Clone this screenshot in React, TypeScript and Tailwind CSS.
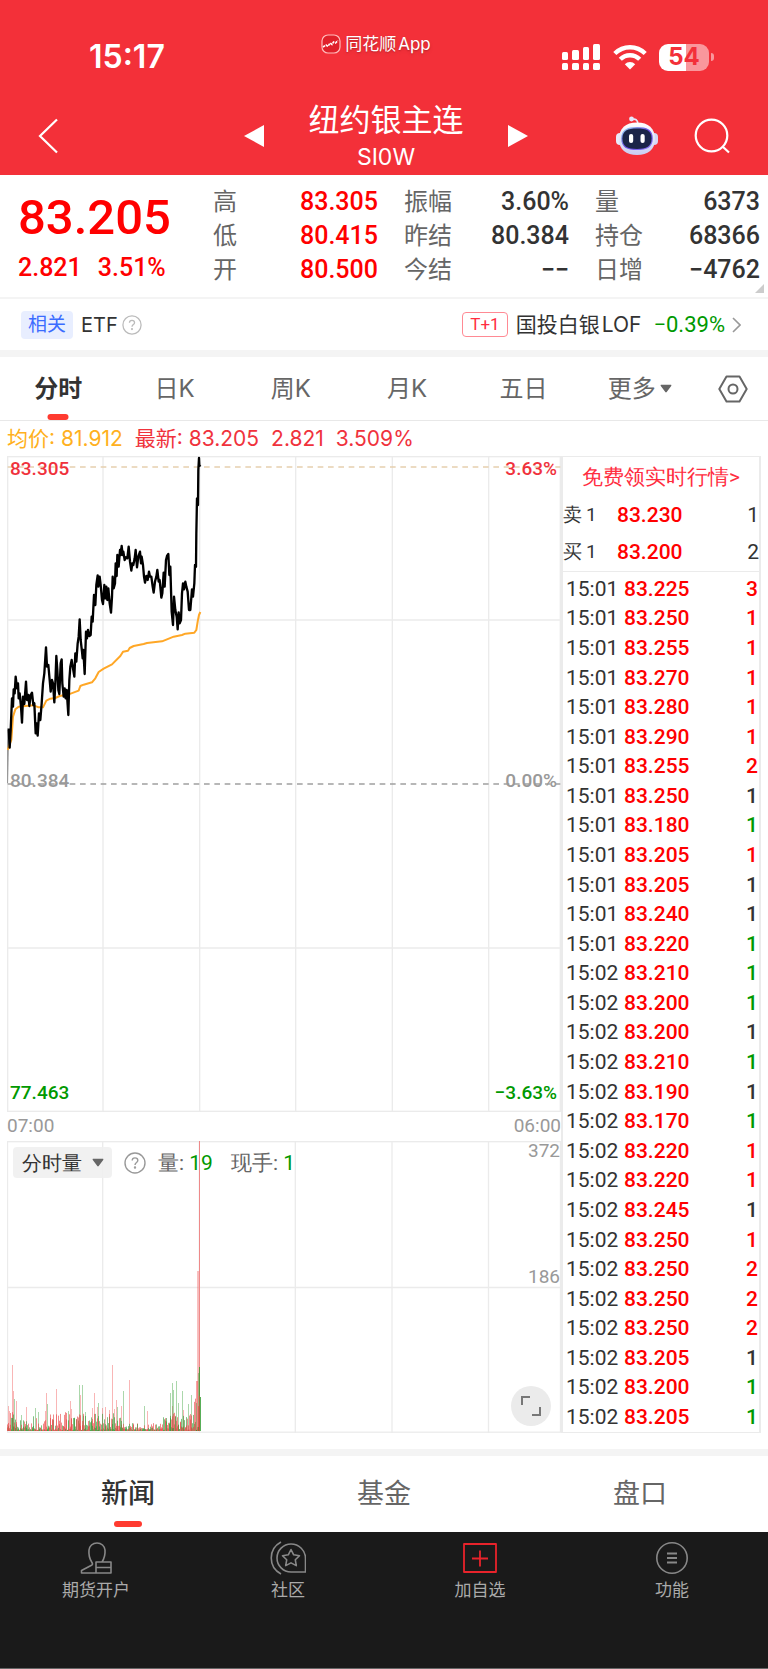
import type { ReactNode } from "react";
import clsx from "clsx";

type Tone = "up" | "down" | "flat";

type Trade = {
  time: string;
  price: string;
  volume: number;
  tone: Tone;
};

const toneText = {
  up: "text-[#ff0000]",
  down: "text-[#009900]",
  flat: "text-[#333333]",
};

const quoteColumns = [
  [
    { label: "高", value: "83.305", tone: "up" },
    { label: "低", value: "80.415", tone: "up" },
    { label: "开", value: "80.500", tone: "up" },
  ],
  [
    { label: "振幅", value: "3.60%", tone: "flat" },
    { label: "昨结", value: "80.384", tone: "flat" },
    { label: "今结", value: "−−", tone: "flat" },
  ],
  [
    { label: "量", value: "6373", tone: "flat" },
    { label: "持仓", value: "68366", tone: "flat" },
    { label: "日增", value: "−4762", tone: "flat" },
  ],
] as { label: string; value: string; tone: Tone }[][];

const periods = ["分时", "日K", "周K", "月K", "五日"];

const trades: Trade[] = [
  { time: "15:01", price: "83.225", volume: 3, tone: "up" },
  { time: "15:01", price: "83.250", volume: 1, tone: "up" },
  { time: "15:01", price: "83.255", volume: 1, tone: "up" },
  { time: "15:01", price: "83.270", volume: 1, tone: "up" },
  { time: "15:01", price: "83.280", volume: 1, tone: "up" },
  { time: "15:01", price: "83.290", volume: 1, tone: "up" },
  { time: "15:01", price: "83.255", volume: 2, tone: "up" },
  { time: "15:01", price: "83.250", volume: 1, tone: "flat" },
  { time: "15:01", price: "83.180", volume: 1, tone: "down" },
  { time: "15:01", price: "83.205", volume: 1, tone: "up" },
  { time: "15:01", price: "83.205", volume: 1, tone: "flat" },
  { time: "15:01", price: "83.240", volume: 1, tone: "flat" },
  { time: "15:01", price: "83.220", volume: 1, tone: "down" },
  { time: "15:02", price: "83.210", volume: 1, tone: "down" },
  { time: "15:02", price: "83.200", volume: 1, tone: "down" },
  { time: "15:02", price: "83.200", volume: 1, tone: "flat" },
  { time: "15:02", price: "83.210", volume: 1, tone: "down" },
  { time: "15:02", price: "83.190", volume: 1, tone: "flat" },
  { time: "15:02", price: "83.170", volume: 1, tone: "down" },
  { time: "15:02", price: "83.220", volume: 1, tone: "up" },
  { time: "15:02", price: "83.220", volume: 1, tone: "up" },
  { time: "15:02", price: "83.245", volume: 1, tone: "flat" },
  { time: "15:02", price: "83.250", volume: 1, tone: "up" },
  { time: "15:02", price: "83.250", volume: 2, tone: "up" },
  { time: "15:02", price: "83.250", volume: 2, tone: "up" },
  { time: "15:02", price: "83.250", volume: 2, tone: "up" },
  { time: "15:02", price: "83.205", volume: 1, tone: "flat" },
  { time: "15:02", price: "83.200", volume: 1, tone: "down" },
  { time: "15:02", price: "83.205", volume: 1, tone: "down" },
];

const priceLine =
  "25,835 28,893 31,840 35,745 38,770 40,718 43,730 46,680 50,715 53,700 55,745 58,730 62,770 65,818 68,740 72,762 77,695 80,750 84,735 87,768 91,735 95,728 99,765 102,760 106,850 109,820 112,857 116,790 120,810 124,760 128,700 132,670 137,592 140,650 144,645 148,690 151,725 155,690 158,700 162,757 165,700 168,618 171,660 174,720 177,732 181,640 184,628 186,700 190,740 193,715 196,745 199,720 204,795 207,690 210,650 214,630 218,655 222,680 225,610 228,635 232,580 235,560 238,508 241,570 245,605 247,625 249,600 253,672 257,545 260,565 263,540 267,558 271,555 274,500 277,515 281,435 285,465 288,405 292,376 294,410 298,380 301,405 305,450 308,462 312,405 315,445 318,410 321,450 324,415 328,460 332,488 335,440 337,380 340,415 344,400 346,340 349,378 351,315 355,350 359,300 361,315 364,288 367,315 369,305 373,330 377,322 381,325 385,290 389,335 393,362 396,340 399,345 403,325 406,300 410,352 414,320 419,305 422,340 424,320 428,345 431,380 434,398 438,378 442,390 446,365 449,380 453,380 457,410 460,428 464,395 468,380 471,360 475,395 478,390 483,443 486,430 490,368 493,410 497,330 500,318 504,312 507,375 510,350 514,485 518,525 521,440 525,480 529,500 532,538 535,487 538,520 542,510 545,430 548,400 551,418 555,395 558,410 562,425 566,480 570,480 575,418 578,440 582,400 584,345 587,350 588,250 590,145 593,165 594,60 596,24 597,45 600,50";

const averageLine =
  "22,900 33,870 38,800 45,778 55,770 75,768 100,766 115,772 128,772 138,752 150,746 165,744 178,738 205,733 235,722 240,708 250,704 275,697 285,685 295,666 310,656 335,643 360,618 368,605 383,602 388,594 400,588 430,582 440,579 485,574 500,568 520,560 545,555 555,551 582,548 588,540 592,515 596,495 600,486";

// [x, height] of the taller volume bars
const redSpikes = [
  [8, 25], [9, 20], [12, 66], [13, 40], [16, 30], [26, 24], [46, 38], [56, 42], [45, 20], [70, 30],
  [71, 22], [80, 36], [92, 23], [94, 38], [97, 24], [102, 23], [105, 24], [109, 21], [112, 66], [114, 22],
  [116, 31], [121, 25], [129, 51], [147, 20], [172, 25], [183, 21],
];
const greenSpikes = [
  [14, 32], [21, 16], [35, 23], [47, 27], [38, 19], [68, 20], [79, 46], [82, 46], [85, 19], [98, 28],
  [117, 24], [123, 40], [144, 25], [170, 38], [172, 48], [176, 50], [178, 28], [182, 40], [188, 27], [191, 36],
  [173, 41], [196, 28], [198, 58],
];
// opening, middle and closing waves that the small bars follow
const envelope = (x: number) => {
  if (x < 18) return 18;
  if (x < 33) return 10;
  if (x < 84) return 18;
  if (x < 124) return 17;
  if (x < 162) return 7;
  if (x < 170) return 14;
  if (x < 194) return 18;
  return 36;
};
const noise = (n: number) => {
  const v = Math.sin(n * 12.9898) * 43758.5453;
  return v - Math.floor(v);
};
const smallBars = Array.from({ length: 386 }, (_, i) => {
  const x = 7 + Math.floor(i / 2);
  return { x, red: noise(i + 900) < 0.55, height: 1 + noise(i + 3) ** 2 * envelope(x) };
});

function Triangle({ d, className }: { d: string; className: string }) {
  return (
    <svg viewBox="0 0 20 22" className={className} fill="currentColor" aria-hidden="true">
      <path d={d} />
    </svg>
  );
}

function DownCaret() {
  return (
    <svg viewBox="0 0 12 9" className="w-3 shrink-0" fill="#666" aria-hidden="true">
      <path d="M1.3.8h9.4c.6 0 .9.6.5 1.100L6.700 8c-.4.5-1 .5-1.400 0L.8 1.900C.4 1.400.7.800 1.300.800Z" />
    </svg>
  );
}

function HelpIcon({ className }: { className: string }) {
  return (
    <svg viewBox="0 0 22 22" className={className} fill="none" stroke="currentColor" strokeWidth="1.400" aria-hidden="true">
      <circle cx="11" cy="11" r="10" />
      <path d="M8.200 8.600c0-1.700 1.200-2.700 2.800-2.700s2.800 1 2.800 2.500c0 2-2.800 2.200-2.800 4.600" />
      <circle cx="11" cy="15.500" r=".5" fill="currentColor" />
    </svg>
  );
}

function StatusIcons() {
  return (
    <div className="flex items-center gap-3">
      <svg viewBox="0 0 40 28" className="h-7 w-10" fill="#fff" aria-hidden="true">
        <rect x="1" y="9" width="6" height="8" rx="1.500" />
        <rect x="11" y="7" width="7" height="10" rx="1.500" />
        <rect x="22" y="4" width="6" height="13" rx="1.500" />
        <rect x="32" y="1" width="7" height="16" rx="1.500" />
        <rect x="1" y="20" width="6" height="7" rx="1.500" />
        <rect x="11" y="20" width="7" height="7" rx="1.500" />
        <rect x="22" y="20" width="6" height="7" rx="1.500" />
        <rect x="32" y="20" width="7" height="7" rx="1.500" />
      </svg>
      <svg viewBox="0 0 34 26" className="h-[26px] w-[34px]" aria-hidden="true">
        <g fill="none" stroke="#fff" strokeWidth="4.400">
          <path d="M1.800 9.500a21.500 21.500 0 0 1 30.400 0" />
          <path d="M7.300 15.300a13.700 13.700 0 0 1 19.400 0" />
        </g>
        <path d="M17 25.500 11.800 20.200a7.500 7.500 0 0 1 10.400 0Z" fill="#fff" />
      </svg>
      <div className="flex items-center">
        <div className="flex h-[27px] w-[50px] items-center justify-center rounded-[9px] bg-linear-to-r from-white from-54% to-[#f9979c] to-54% font-[Inter] text-2xl font-bold text-[#f33039]">
          54
        </div>
        <div className="ml-0.5 h-2 w-[3px] rounded-r-full bg-[#f9979c]" />
      </div>
    </div>
  );
}

function Robot() {
  return (
    <svg viewBox="0 0 42 40" className="h-10 w-[42px]" aria-hidden="true">
      <defs>
        <linearGradient id="shell" x1="0" y1="0" x2="0" y2="1">
          <stop offset="0" stopColor="#fff" />
          <stop offset="1" stopColor="#c9cdf2" />
        </linearGradient>
        <linearGradient id="rim" x1="0" y1="0" x2="1" y2="1">
          <stop offset="0" stopColor="#9be0f5" />
          <stop offset=".5" stopColor="#6a4be0" />
          <stop offset="1" stopColor="#8e7cf5" />
        </linearGradient>
      </defs>
      <path d="M16 3.500c3-1 6 0 6 5" fill="none" stroke="#e4e6fa" strokeWidth="1.600" />
      <circle cx="15.500" cy="3" r="2.400" fill="#e4e6fa" />
      <rect x="0" y="17" width="8" height="12" rx="4" fill="#e9ebfb" />
      <rect x="34" y="17" width="8" height="12" rx="4" fill="#d5d8f5" />
      <path d="M21 6.500c11.500 0 18 6 18 16.500S32 39 21 39 3 33.500 3 23 9.500 6.500 21 6.500Z" fill="url(#shell)" />
      <path d="M21 11c10 0 15.800 2.500 15.800 11.500S31 34 21 34 5.200 31.500 5.200 22.500 11 11 21 11Z" fill="url(#rim)" />
      <path d="M21 12.500c9.500 0 14.600 2.200 14.600 10S30.500 33 21 33 6.400 30.300 6.400 22.500 11.500 12.500 21 12.500Z" fill="#1b2448" />
      <rect x="13" y="18" width="4.200" height="9" rx="2" fill="#fff" />
      <rect x="24.500" y="18" width="4.200" height="9" rx="2" fill="#fff" />
    </svg>
  );
}

function Header() {
  return (
    <header className="bg-[#f33039] text-white">
      <div className="grid h-[92px] grid-cols-3 items-center pt-[22px]">
        <span className="pl-[89px] font-[Inter] text-[32px] font-semibold">15:17</span>
        <div className="flex items-center justify-center gap-0.5 self-start pr-4 text-[17px] leading-[44px] text-shadow-md">
          <svg viewBox="0 0 20 20" className="size-5" fill="none" aria-hidden="true">
            <rect x="1" y="1" width="18" height="18" rx="6" fill="#e0202a" stroke="#fbb" strokeWidth="1.200" />
            <path d="m2 13 3-2 2 1.500L9 9l2 1.500L12.500 8l2 1L17 6.500" stroke="#fff" strokeWidth="1.600" strokeDasharray="2.500 1" />
          </svg>
          <span className="ml-0.5 whitespace-nowrap">同花顺</span>
          <span>App</span>
        </div>
        <div className="flex justify-end pr-[54px]">
          <StatusIcons />
        </div>
      </div>
      <div className="grid h-[83px] grid-cols-3 items-center pt-1">
        <button type="button" aria-label="返回" className="pl-[38px]">
          <svg viewBox="0 0 20 36" className="h-9 w-5" fill="none" stroke="#fff" strokeWidth="2.200" aria-hidden="true">
            <path d="M19 1.500 2 18l17 16.500" />
          </svg>
        </button>
        <div className="-mr-4 -ml-3 flex items-center justify-between">
          <button type="button" aria-label="上一个">
            <Triangle d="M0 11 20 0v22Z" className="w-5" />
          </button>
          <div className="text-center">
            <h1 className="text-[31px] leading-[42px]">纽约银主连</h1>
            <p className="font-[Inter] text-[23px] leading-8">SI0W</p>
          </div>
          <button type="button" aria-label="下一个">
            <Triangle d="M20 11 0 0v22Z" className="w-5" />
          </button>
        </div>
        <div className="flex items-center justify-end gap-9 pr-[38px]">
          <button type="button" aria-label="智能助手">
            <Robot />
          </button>
          <button type="button" aria-label="搜索">
            <svg viewBox="0 0 36 36" className="size-9" fill="none" stroke="#fff" strokeWidth="2.200" aria-hidden="true">
              <circle cx="17.500" cy="17.500" r="15.800" />
              <path d="m28.500 28.500 6.500 6" />
            </svg>
          </button>
        </div>
      </div>
    </header>
  );
}

function Quote() {
  return (
    <section className="relative flex h-[124px] border-b-2 border-[#f4f4f4] pt-[10px] pr-2">
      <div className="w-[213px] shrink-0 pl-[18px] font-[Roboto] font-medium text-[#ff0000]">
        <div className="text-[49px] leading-[66px]">83.205</div>
        <div className="flex gap-4 text-[25px] leading-[34px]">
          <span>2.821</span>
          <span>3.51%</span>
        </div>
      </div>
      <div className="grid flex-1 grid-cols-3 gap-x-[26px]">
        {quoteColumns.map((column, index) => (
          <dl key={index}>
            {column.map((item) => (
              <div key={item.label} className="flex justify-between leading-[34px]">
                <dt className="text-2xl leading-[34px] text-[#666]">{item.label}</dt>
                <dd className={clsx("font-[Roboto] text-[25px] font-medium", toneText[item.tone])}>{item.value}</dd>
              </div>
            ))}
          </dl>
        ))}
      </div>
      <svg viewBox="0 0 9 9" className="absolute right-1 bottom-1 w-[9px]" fill="#ccc" aria-hidden="true">
        <path d="M9 0v9H0Z" />
      </svg>
    </section>
  );
}

function RelatedFund() {
  return (
    <section className="flex h-[51px] items-center justify-between pr-[27px] pl-[21px] text-[#333]">
      <div className="flex items-center gap-2">
        <span className="rounded-sm bg-[#e8eeff] px-[7px] text-[19px] leading-7 text-[#3b6cff]">相关</span>
        <span className="text-xl">ETF</span>
        <button type="button" aria-label="说明" className="-ml-1">
          <HelpIcon className="size-5 text-[#bbb]" />
        </button>
      </div>
      <a href="#fund" className="flex items-center text-[21px]">
        <span className="mr-2 rounded-sm border border-[#ff8a94] px-[7px] font-[Roboto] text-[17px] leading-[23px] text-[#ff2d3f]">T+1</span>
        <span>国投白银</span>
        <span className="ml-0.5">LOF</span>
        <span className="ml-3 font-[Roboto] text-[22px] text-[#009900]">−0.39%</span>
        <svg viewBox="0 0 9 16" className="ml-[7px] w-[9px]" fill="none" stroke="#999" strokeWidth="1.600" aria-hidden="true">
          <path d="m1 1 7 7-7 7" />
        </svg>
      </a>
    </section>
  );
}

function PeriodTabs() {
  return (
    <nav className="flex h-[64px] border-b border-[#e8e8e8] text-2xl text-[#666]">
      {periods.map((name, index) => (
        <button
          key={name}
          type="button"
          className={clsx("relative flex-1", index === 0 && "font-bold text-[#333]")}
        >
          {name}
          {index === 0 && (
            <span className="absolute bottom-0 left-1/2 h-[6px] w-[21px] -translate-x-1/2 rounded-full bg-[#ff3b30]" />
          )}
        </button>
      ))}
      <button type="button" className="flex flex-1 items-center justify-center gap-1">
        更多
        <DownCaret />
      </button>
      <button type="button" aria-label="设置" className="flex w-[70px] items-center justify-center">
        <svg viewBox="0 0 30 28" className="w-[30px]" fill="none" stroke="#666" strokeWidth="2" strokeLinejoin="round" aria-hidden="true">
          <path d="M8.500 1.500h13L28.700 14l-7.200 12.500h-13L1.300 14Z" />
          <circle cx="15" cy="14" r="4.500" />
        </svg>
      </button>
    </nav>
  );
}

function PriceChart() {
  return (
    <div className="relative h-[656px] font-[Roboto] text-[19px] leading-6 font-medium">
      <svg viewBox="20 18 1662 1968" preserveAspectRatio="none" className="h-full w-full" fill="none" aria-hidden="true">
        <g stroke="#ebebeb" strokeWidth="4">
          <rect x="22" y="20" width="1658" height="1964" />
          <path d="M308 18v1968M598 18v1968M886 18v1968M1176 18v1968M1465 18v1968M20 510h1662M20 1494h1662" />
        </g>
        <path d="M22 51h1658" stroke="#e6cfae" strokeWidth="5" strokeDasharray="17 14" />
        <path d="M22 1002h1658" stroke="#a0a0a0" strokeWidth="4" strokeDasharray="17 14" />
        <path d="M20 1000 24 840" stroke="#999" strokeWidth="6" />
        <polyline points={averageLine} stroke="#ffa726" strokeWidth="6" strokeLinejoin="round" />
        <polyline points={priceLine} stroke="#000" strokeWidth="7" strokeLinejoin="round" />
      </svg>
      <span className="absolute top-px left-[3px] text-[#f0323c]">83.305</span>
      <span className="absolute top-px right-1 text-[#f0323c]">3.63%</span>
      <span className="absolute top-1/2 left-[3px] -translate-y-[15px] text-[#999]">80.384</span>
      <span className="absolute top-1/2 right-1 -translate-y-[15px] text-[#999]">0.00%</span>
      <span className="absolute bottom-[7px] left-[3px] text-[#009900]">77.463</span>
      <span className="absolute right-1 bottom-[7px] text-[#009900]">−3.63%</span>
    </div>
  );
}

function VolumeChart() {
  return (
    <div className="relative h-[292px] font-[Roboto] text-[19px] leading-5 text-[#999]">
      <svg viewBox="7 0 554 292" preserveAspectRatio="none" className="h-full w-full" fill="none" aria-hidden="true">
        <g stroke="#ebebeb" strokeWidth="1.300">
          <rect x="7.500" y=".7" width="553" height="290.500" />
          <path d="M102.700 0v292M199.300 0v292M295.300 0v292M392 0v292M488.500 0v292M7 146.500h554" />
        </g>
        <g fill="#f04848">
          {redSpikes.map(([x, h]) => (
            <rect key={x} x={x} y={290 - h} width="1" height={h} opacity=".4" />
          ))}
          <rect x="197" y="130" width="2" height="160" opacity=".35" />
          <rect x="199" y="0" width="1" height="290" opacity=".6" />
          <rect x="196" y="240" width="2" height="50" opacity=".5" />
        </g>
        <g fill="#2e9a2e">
          {greenSpikes.map(([x, h]) => (
            <rect key={x} x={x} y={290 - h} width="1" height={h} opacity=".4" />
          ))}
          <rect x="199" y="226" width="1" height="64" opacity=".8" />
          <rect x="200" y="256" width="1" height="34" opacity=".8" />
        </g>
        {smallBars.map((bar, index) => (
          <rect
            key={index}
            x={bar.x}
            y={290 - bar.height}
            width="1"
            height={bar.height}
            fill={bar.red ? "#e84040" : "#2e962e"}
            opacity=".6"
          />
        ))}
      </svg>
      <div className="absolute top-[6px] left-[6px] flex items-center text-[21px] text-[#666]">
        <button type="button" className="flex h-[31px] items-center gap-[10px] rounded-sm bg-[#f0f0f0]/90 pr-2 pl-[9px] text-xl text-[#333]">
          分时量
          <DownCaret />
        </button>
        <button type="button" aria-label="说明" className="mr-3 ml-3">
          <HelpIcon className="size-[22px] text-[#999]" />
        </button>
        <span>
          量: <span className="text-[#009900]">19</span>
        </span>
        <span className="ml-[18px]">
          现手: <span className="text-[#009900]">1</span>
        </span>
      </div>
      <span className="absolute top-0 right-px">372</span>
      <span className="absolute right-px bottom-1/2">186</span>
      <button
        type="button"
        aria-label="全屏"
        className="absolute right-[10px] bottom-[7px] flex size-10 items-center justify-center rounded-full bg-[#ebebeb]"
      >
        <svg viewBox="0 0 22 22" className="size-[22px]" fill="none" stroke="#777" strokeWidth="2" aria-hidden="true">
          <path d="M2 10V2h8M20 12v8h-8" />
        </svg>
      </button>
    </div>
  );
}

function OrderPanel() {
  const book = [
    { side: "卖", price: "83.230", volume: 1 },
    { side: "买", price: "83.200", volume: 2 },
  ];

  return (
    <aside className="w-[200px] shrink-0 border-x-2 border-y border-[#ebebeb] font-[Roboto] text-[21px]">
      <a href="#level2" className="block text-center leading-10 text-[#ff2d3f]">
        免费领实时行情&gt;
      </a>
      <table className="w-full text-[#333]">
        <tbody>
          {book.map((row) => (
            <tr key={row.side} className="h-[37px]">
              <th className="w-[54px] p-0 text-left text-[19px] font-normal whitespace-nowrap">
                {row.side}
                <span className="ml-1">1</span>
              </th>
              <td className="p-0 font-medium text-[#ff0000]">{row.price}</td>
              <td className="p-0 text-right">{row.volume}</td>
            </tr>
          ))}
        </tbody>
      </table>
      <div className="border-t border-[#ebebeb] pt-0.5">
        <table className="h-[858px] w-full leading-6">
          <tbody>
            {trades.map((trade, index) => (
              <tr key={index}>
                <td className="w-[61px] p-0 pl-[3px] text-[#333]">{trade.time}</td>
                <td className="p-0 font-medium text-[#ff0000]">{trade.price}</td>
                <td className={clsx("p-0 pr-px text-right font-medium", toneText[trade.tone])}>{trade.volume}</td>
              </tr>
            ))}
          </tbody>
        </table>
      </div>
    </aside>
  );
}

function NavItem({ label, children }: { label: string; children: ReactNode }) {
  return (
    <button type="button" className="flex flex-1 flex-col items-center text-[17px] text-[#aaa]">
      <svg viewBox="0 0 36 34" className="h-[34px] w-9" fill="none" stroke="#888" strokeWidth="1.600" strokeLinejoin="round" aria-hidden="true">
        {children}
      </svg>
      <span className="leading-[30px]">{label}</span>
    </button>
  );
}

function BottomNav() {
  return (
    <nav className="flex h-[137px] items-start border-b border-[#666] bg-[#1a1a1a] pt-[9px]">
      <NavItem label="期货开户">
        <path d="M18 32H3.500v-2.500L14 24c1-.8.500-1.800-.3-3-2.200-3.500-3.200-7-2.700-12 .4-4 3.600-7 8-7s7.600 3 8 7c.4 5-.5 8-3 12M18 21h15v11H18Zm0 5.500h15" />
      </NavItem>
      <NavItem label="社区">
        <path d="M21 3a14.500 14.500 0 0 1 14.500 14.500V31H21A14 14 0 0 1 21 3ZM11 33C-2 26-2 8 11 1" />
        <path d="m21 8.500 2.700 5.300 5.800.9-4.200 4.100 1 5.800-5.300-2.700-5.300 2.700 1-5.800-4.200-4.100 5.800-.9Z" />
      </NavItem>
      <NavItem label="加自选">
        <path d="M2 3h32v28H2ZM18 9.500v16M10 17.500h16" stroke="#e8232b" strokeWidth="1.800" />
      </NavItem>
      <NavItem label="功能">
        <circle cx="18" cy="17" r="15.200" />
        <path d="M13 12.500h10M13 17h10M13 21.500h10" strokeWidth="1.900" />
      </NavItem>
    </nav>
  );
}

export default function App() {
  return (
    <div className="w-full bg-white font-[Inter,'Noto_Sans_CJK_SC',sans-serif]">
      <Header />
      <Quote />
      <RelatedFund />
      <div className="h-[7px] bg-[#f4f4f4]" />
      <PeriodTabs />
      <div className="flex h-[35px] items-center gap-3 pl-[7px] text-[21px] text-[#f0323c]">
        <span className="text-[#ffb020]">均价: 81.912</span>
        <span>最新: 83.205</span>
        <span>2.821</span>
        <span>3.509%</span>
      </div>

      <main className="flex px-[7px]">
        <div className="min-w-0 flex-1">
          <PriceChart />
          <div className="flex h-[29px] items-center justify-between font-[Roboto] text-[19px] text-[#999]">
            <span>07:00</span>
            <span>06:00</span>
          </div>
          <VolumeChart />
        </div>
        <OrderPanel />
      </main>

      <div className="mt-4 h-[7px] bg-[#f4f4f4]" />
      <nav className="flex h-[76px] text-[27px] text-[#666]">
        {["新闻", "基金", "盘口"].map((name, index) => (
          <button
            key={name}
            type="button"
            className={clsx("relative flex-1", index === 0 && "font-medium text-[#333]")}
          >
            {name}
            {index === 0 && (
              <span className="absolute bottom-[5px] left-1/2 h-[6px] w-7 -translate-x-1/2 rounded-full bg-[#ff3b30]" />
            )}
          </button>
        ))}
      </nav>
      <BottomNav />
    </div>
  );
}
